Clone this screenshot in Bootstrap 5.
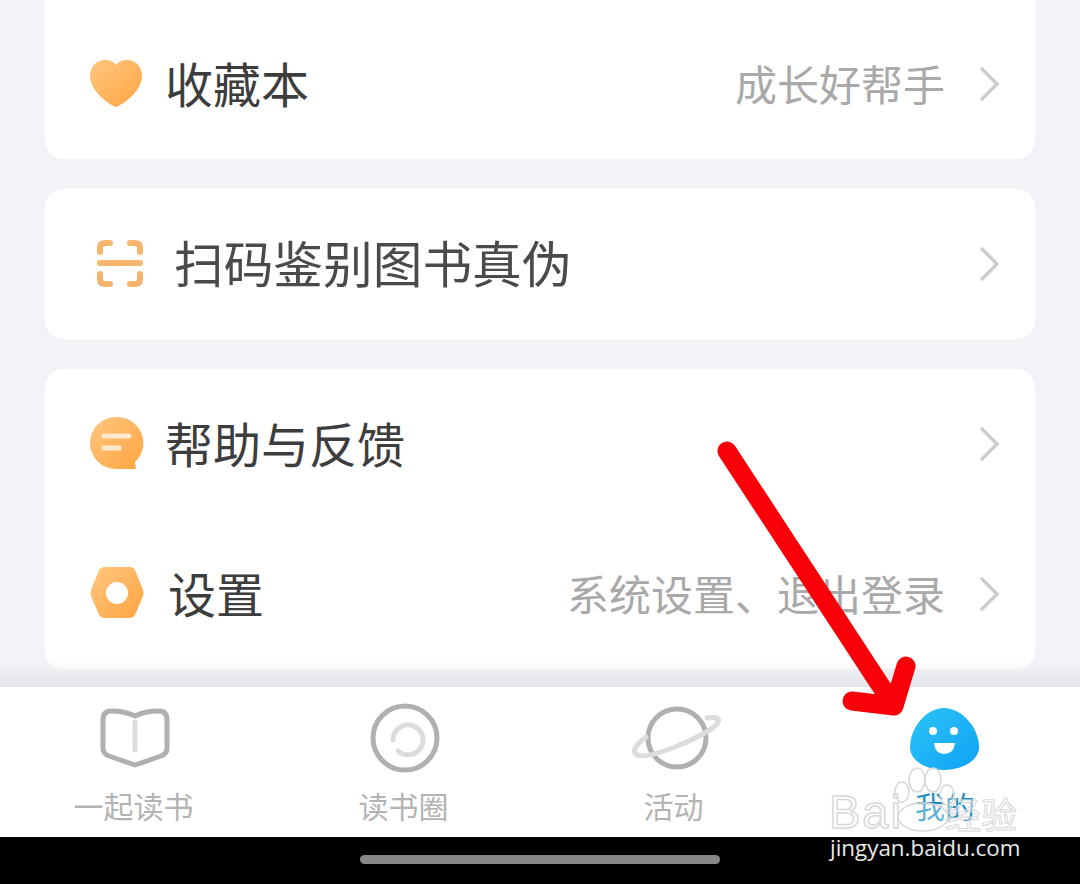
<!DOCTYPE html>
<html lang="zh-CN">
<head>
  <meta charset="UTF-8" />
  <meta name="viewport" content="width=device-width, initial-scale=1.0"/>
  <title>我的</title>
  <link href="https://cdn.jsdelivr.net/npm/bootstrap@5.3.2/dist/css/bootstrap.min.css" rel="stylesheet">
  <style>
    html, body { height: 884px; overflow: hidden; }
    body { font-family: "Noto Sans CJK SC", "Liberation Sans", sans-serif; background: #f2f3f7; }
    .screen { height: 884px; }
    .content { height: 687px; padding: 0 45px; gap: 30px; overflow: hidden; }
    .menu-card { background: #fff; border-radius: 18px; }
    .menu-card-first { border-radius: 0 0 18px 18px; padding-top: 9px; }
    .menu-row { height: 150px; padding: 0 36px 0 40px; }
    .menu-icon { width: 60px; height: 60px; flex: none; }
    .menu-label { color: #3d3d3d; line-height: 1; margin-bottom: 4px; }
    .label-fav { font-size: 48px; margin-left: 20px; }
    .label-scan { font-size: 49.7px; margin-left: 29px; color: #4a4a4a; }
    .label-help { font-size: 48px; margin-left: 20px; }
    .label-set { font-size: 48px; margin-left: 23px; }
    .menu-hint { color: #a9a9a9; font-size: 42px; line-height: 1; margin-right: 34px; margin-bottom: 2px; }
    .tabbar { height: 150px; background: #fff; position: relative; }
    .tabbar::before { content: ""; position: absolute; left: 0; right: 0; bottom: 100%; height: 27px; background: linear-gradient(rgba(0,0,0,0), rgba(0,0,0,.06)); }
    .tab-item { width: 270px; padding-top: 16px; }
    .tab-icon { width: 100px; height: 70px; }
    .tab-label { font-size: 30px; line-height: 40px; margin-top: 12px; color: #b3b3b3; }
    .tab-shift { margin-right: 3px; }
    .tab-active { color: #1f8fbf; }
    .navstrip { height: 47px; background: #000; padding-top: 18px; }
    .home-pill { width: 360px; height: 9px; background: #888; border-radius: 5px; }
    .overlay { position: absolute; left: 0; top: 0; pointer-events: none; }
    .wm-text { position: absolute; left: 829px; top: 794px; font-family: "Liberation Sans", sans-serif; font-size: 47px; line-height: 36px; letter-spacing: 2px; color: rgba(255,255,255,.35); -webkit-text-stroke: 1.5px #d8d8d8; }
    .wm-cn { position: absolute; left: 945px; top: 795px; font-size: 36px; line-height: 36px; color: rgba(255,255,255,.35); -webkit-text-stroke: 1px #d8d8d8; }
    .wm-url { position: absolute; left: 830px; top: 836px; font-family: "Open Sans", sans-serif; font-size: 22.4px; line-height: 24px; color: #e8e8e8; }
  </style>
</head>
<body>
  <div class="screen d-flex flex-column position-relative">

    <!-- Menu cards -->
    <div class="content d-flex flex-column">
      <div class="menu-card menu-card-first">
        <div class="menu-row d-flex align-items-center">
          <svg class="menu-icon" viewBox="85 54 60 60">
            <defs><linearGradient id="orange" x1="0" y1="0" x2="1" y2="1"><stop offset="0" stop-color="#ffc780"/><stop offset="1" stop-color="#ffa440"/></linearGradient></defs>
            <path d="M116 107C108 104 90 91 90 76C90 66 97 60 105 60C110 60 114 62 116 65C118 62 122 60 127 60C135 60 142 66 142 76C142 91 124 104 116 107Z" fill="url(#orange)"/>
          </svg>
          <span class="menu-label label-fav">收藏本</span>
          <span class="menu-hint ms-auto">成长好帮手</span>
          <svg width="20" height="36" viewBox="0 0 20 36"><path d="M2 2L18 18L2 34" fill="none" stroke="#cdcdcd" stroke-width="3.5"/></svg>
        </div>
      </div>

      <div class="menu-card">
        <div class="menu-row d-flex align-items-center">
          <svg class="menu-icon" viewBox="85 234 60 60">
            <g fill="none" stroke="#f5b56c" stroke-width="6" stroke-linecap="round">
              <path d="M110 243H105Q100 243 100 248V252"/>
              <path d="M130 243H135Q140 243 140 248V252"/>
              <path d="M100 274V279Q100 284 105 284H110"/>
              <path d="M140 274V279Q140 284 135 284H130"/>
              <path d="M100 263H140"/>
            </g>
          </svg>
          <span class="menu-label label-scan">扫码鉴别图书真伪</span>
          <svg class="ms-auto" width="20" height="36" viewBox="0 0 20 36"><path d="M2 2L18 18L2 34" fill="none" stroke="#cdcdcd" stroke-width="3.5"/></svg>
        </div>
      </div>

      <div class="menu-card">
        <div class="menu-row d-flex align-items-center">
          <svg class="menu-icon" viewBox="85 414 60 60">
            <path d="M116 417A26 26 0 1 0 116 469H136L135 462A26 26 0 0 0 116 417Z" fill="url(#orange)"/>
            <path d="M104 436H129M104 448H119" stroke="#ffe9cf" stroke-width="5" stroke-linecap="round" fill="none"/>
          </svg>
          <span class="menu-label label-help">帮助与反馈</span>
          <svg class="ms-auto" width="20" height="36" viewBox="0 0 20 36"><path d="M2 2L18 18L2 34" fill="none" stroke="#cdcdcd" stroke-width="3.5"/></svg>
        </div>
        <div class="menu-row d-flex align-items-center">
          <svg class="menu-icon" viewBox="85 564 60 60">
            <path d="M104 567H130Q133 567 135 570L143 590Q144 593 143 596L135 615Q133 618 130 618H104Q101 618 99 615L91 596Q90 593 91 590L99 570Q101 567 104 567Z" fill="url(#orange)"/>
            <circle cx="117" cy="593" r="11" fill="#fff"/>
          </svg>
          <span class="menu-label label-set">设置</span>
          <span class="menu-hint ms-auto">系统设置、退出登录</span>
          <svg width="20" height="36" viewBox="0 0 20 36"><path d="M2 2L18 18L2 34" fill="none" stroke="#cdcdcd" stroke-width="3.5"/></svg>
        </div>
      </div>
    </div>

    <!-- Tab bar -->
    <div class="tabbar d-flex">
      <div class="tab-item d-flex flex-column align-items-center">
        <svg class="tab-icon" viewBox="84 703 100 70">
          <path d="M102 720Q102 711 110 711Q124 711 134 716Q144 711 158 711Q166 711 166 720V748Q166 754 160 756L134 765L108 756Q102 754 102 748Z" fill="none" stroke="#b0b0b0" stroke-width="5" stroke-linejoin="round"/>
          <path d="M134 722V750" stroke="#dcdcdc" stroke-width="5" stroke-linecap="round"/>
        </svg>
        <span class="tab-label tab-shift">一起读书</span>
      </div>
      <div class="tab-item d-flex flex-column align-items-center">
        <svg class="tab-icon" viewBox="354 703 100 70">
          <circle cx="404" cy="738" r="32" fill="none" stroke="#b0b0b0" stroke-width="5"/>
          <path d="M392 740A15 15 0 1 1 397 751" fill="none" stroke="#dcdcdc" stroke-width="5" stroke-linecap="round"/>
        </svg>
        <span class="tab-label tab-shift">读书圈</span>
      </div>
      <div class="tab-item d-flex flex-column align-items-center">
        <svg class="tab-icon" viewBox="624 703 100 70">
          <circle cx="676" cy="738" r="29" fill="none" stroke="#b0b0b0" stroke-width="5"/>
          <path d="M706 718Q722 716 716 724C706 735 650 760 636 755Q628 750 645 737" fill="none" stroke="#dcdcdc" stroke-width="5" stroke-linecap="round"/>
        </svg>
        <span class="tab-label tab-shift">活动</span>
      </div>
      <div class="tab-item d-flex flex-column align-items-center">
        <svg class="tab-icon" viewBox="895 703 100 70">
          <defs><linearGradient id="blue" x1="0" y1="0" x2="1" y2="1"><stop offset="0" stop-color="#2cc4f8"/><stop offset="1" stop-color="#10a2f5"/></linearGradient></defs>
          <path d="M944 708C962 708 979 728 979 747C979 762 960 770 944 770C928 770 910 762 910 747C910 728 926 708 944 708Z" fill="url(#blue)"/>
          <circle cx="933" cy="731" r="4" fill="#fff"/>
          <circle cx="954" cy="731" r="4" fill="#fff"/>
          <path d="M934 743H955Q954 754 944 754Q935 754 934 743Z" fill="#fff"/>
        </svg>
        <span class="tab-label tab-active">我的</span>
      </div>
    </div>

    <!-- Gesture bar -->
    <div class="navstrip d-flex justify-content-center">
      <div class="home-pill"></div>
    </div>

    <!-- Red arrow and watermark lie over the screenshot -->
    <svg class="overlay" width="1080" height="884" viewBox="0 0 1080 884">
      <path d="M727 451L894 706M906 666L894 706L852 701" fill="none" stroke="#f70007" stroke-width="19" stroke-linecap="round" stroke-linejoin="round"/>
      <g fill="rgba(255,255,255,.3)" stroke="#d8d8d8" stroke-width="1.5">
        <ellipse cx="902" cy="792" rx="7" ry="10"/>
        <ellipse cx="917" cy="780" rx="8" ry="12"/>
        <ellipse cx="933" cy="780" rx="8" ry="12"/>
        <ellipse cx="947" cy="795" rx="7" ry="10"/>
        <ellipse cx="923" cy="817" rx="25" ry="14"/>
      </g>
    </svg>
    <span class="wm-text">Bai</span>
    <span class="wm-cn">经验</span>
    <span class="wm-url">jingyan.baidu.com</span>
  </div>
  <script src="https://cdn.jsdelivr.net/npm/bootstrap@5.3.2/dist/js/bootstrap.bundle.min.js"></script>
</body>
</html>
